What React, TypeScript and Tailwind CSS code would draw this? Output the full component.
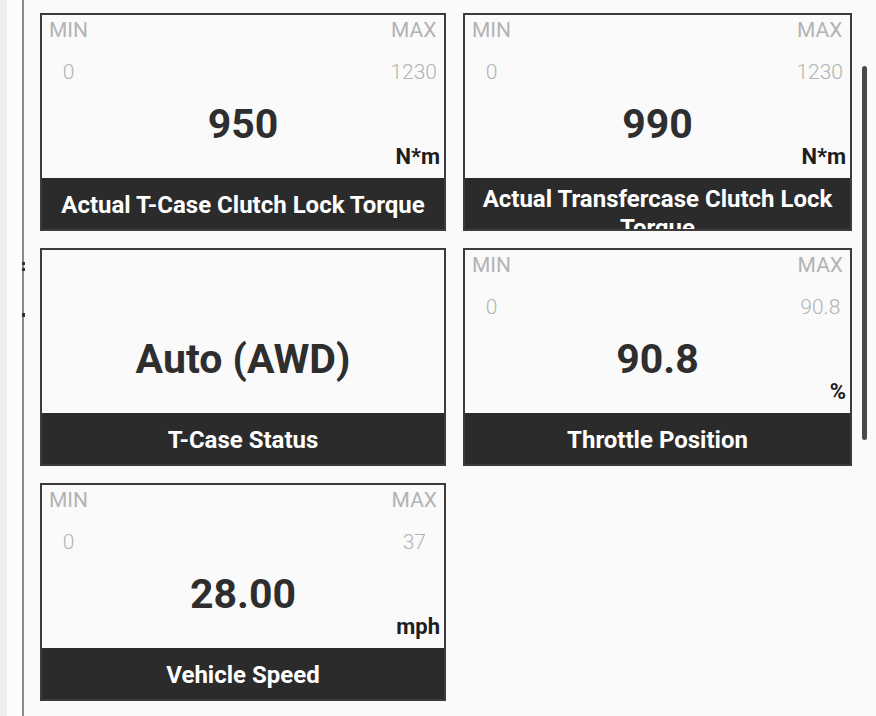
import React from "react";

type Gauge = {
  min?: string;
  max?: string;
  value: string;
  unit?: string;
  label: string;
  wrap?: boolean;
};

const font = { fontFamily: "Roboto, 'Noto Sans', Arial, sans-serif" };

function Card({ g }: { g: Gauge }) {
  const showRange = g.min !== undefined;
  return (
    <div className="flex h-[218px] flex-col border-2 border-[#3c3c3c] bg-[#fafafa]">
      <div className="flex h-[163px] flex-col px-[7px]">
        <div className={`flex justify-between pt-[2px] ${showRange ? "" : "invisible"}`}>
          <div className="flex flex-col items-center">
            <span className="text-[21px] leading-[26px] font-normal text-[#b3b3b3]">MIN</span>
            <span className="mt-[16px] text-[21px] leading-[26px] font-light text-[#b3b3b3]">{g.min ?? "0"}</span>
          </div>
          <div className="flex flex-col items-center">
            <span className="text-[21px] leading-[26px] font-normal text-[#b3b3b3]">MAX</span>
            <span className="mt-[16px] text-[21px] leading-[26px] font-light text-[#b3b3b3]">{g.max ?? "0"}</span>
          </div>
        </div>
        <div className="mt-[19px] text-center text-[41px] leading-[40px] font-bold text-[#2e2e2e]">{g.value}</div>
        <div className="-mr-[3px] mt-[1px] h-[24px] text-right text-[22px] leading-[24px] font-bold text-[#1e1e1e]">
          {g.unit}
        </div>
      </div>
      <div
        className={`flex h-[51px] justify-center overflow-hidden bg-[#2b2b2b] px-2 ${
          g.wrap ? "items-start pt-[7px]" : "items-center pt-[3px]"
        }`}
      >
        <span className="text-center text-[24px] leading-[29px] font-bold text-white">{g.label}</span>
      </div>
    </div>
  );
}

const gauges: Gauge[] = [
  { min: "0", max: "1230", value: "950", unit: "N*m", label: "Actual T-Case Clutch Lock Torque" },
  { min: "0", max: "1230", value: "990", unit: "N*m", label: "Actual Transfercase Clutch Lock Torque", wrap: true },
  { value: "Auto (AWD)", label: "T-Case Status" },
  { min: "0", max: "90.8", value: "90.8", unit: "%", label: "Throttle Position" },
  { min: "0", max: "37", value: "28.00", unit: "mph", label: "Vehicle Speed" },
];

export default function App() {
  return (
    <div className="relative flex h-[716px] w-[876px] overflow-hidden bg-[#fafafa]" style={font}>
      <div className="w-[7px] shrink-0 bg-[#eef0f0]" />
      <div className="w-[15px] shrink-0 bg-[#fcfcfc]" />
      <div className="relative w-[2px] shrink-0 bg-[#8a8a8a]">
        <div className="absolute left-0 top-[262px] h-[3px] w-[3px] bg-[#333]" />
        <div className="absolute left-0 top-[268px] h-[3px] w-[3px] bg-[#333]" />
        <div className="absolute left-0 top-[313px] h-[4px] w-[3px] bg-[#333]" />
      </div>
      <div className="grid flex-1 grid-cols-[406px_389px] content-start gap-[17px] pl-[16px] pt-[13px]">
        {gauges.map((g, i) => (
          <Card key={i} g={g} />
        ))}
      </div>
      <div className="absolute left-[862px] top-[66px] h-[374px] w-[5px] rounded-full bg-[#4a4a4a]" />
    </div>
  );
}
